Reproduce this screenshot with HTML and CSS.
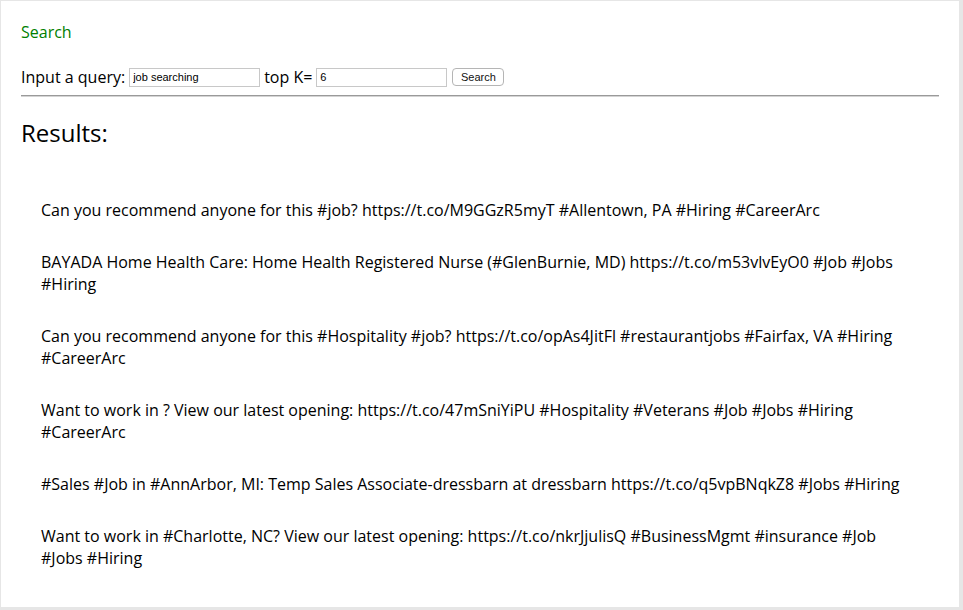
FILE: index.html
```html
<!DOCTYPE html>
<html>
<head>
<meta charset="utf-8">
<link rel="stylesheet" href="styles.css">
</head>
<body>
<div class="frame">
  <div class="page">
    <div class="title">Search</div>
    <form class="query">
      <label class="lbl">Input a query:</label>
      <input class="field" type="text" value="job searching">
      <label class="lbl">top K=</label>
      <input class="field" type="text" value="6">
      <button class="btn" type="button">Search</button>
    </form>
    <hr class="rule">
    <h2 class="heading">Results:</h2>
    <ul class="results">
      <li>Can you recommend anyone for this #job? https://t.co/M9GGzR5myT #Allentown, PA #Hiring #CareerArc</li>
      <li>BAYADA Home Health Care: Home Health Registered Nurse (#GlenBurnie, MD) https://t.co/m53vlvEyO0 #Job #Jobs #Hiring</li>
      <li>Can you recommend anyone for this #Hospitality #job? https://t.co/opAs4JitFl #restaurantjobs #Fairfax, VA #Hiring<br>#CareerArc</li>
      <li>Want to work in ? View our latest opening: https://t.co/47mSniYiPU #Hospitality #Veterans #Job #Jobs #Hiring #CareerArc</li>
      <li>#Sales #Job in #AnnArbor, MI: Temp Sales Associate-dressbarn at dressbarn https://t.co/q5vpBNqkZ8 #Jobs #Hiring</li>
      <li>Want to work in #Charlotte, NC? View our latest opening: https://t.co/nkrJjulisQ #BusinessMgmt #insurance #Job #Jobs #Hiring</li>
    </ul>
  </div>
</div>
</body>
</html>
```
FILE: styles.css
```css
html, body {
  margin: 0;
  padding: 0;
  background: #e6e6e6;
}
.frame {
  width: 958px;
  height: 606px;
  margin-top: 1px;
  margin-left: 1px;
  background: #fff;
  overflow: hidden;
}
.page {
  padding: 20px 20px 0 20px;
  font-family: "Open Sans", "Liberation Sans", sans-serif;
  font-size: 16px;
  color: #000;
}
.title {
  color: #008000;
  line-height: 22px;
}
.query {
  display: flex;
  align-items: center;
  margin-top: 23px;
  height: 22px;
}
.lbl {
  line-height: 22px;
  margin-right: 4px;
}
.field {
  width: 131px;
  height: 19px;
  box-sizing: border-box;
  border: 1px solid #c8c8c8;
  padding: 1px 3px;
  font-family: "Liberation Sans", Arial, sans-serif;
  font-size: 11px;
  margin: 0 4px 0 0;
  color: #000;
}
.btn {
  width: 52px;
  height: 18px;
  box-sizing: border-box;
  margin: 0 0 0 1px;
  padding: 0;
  border: 1px solid #b5b5b5;
  border-radius: 4px;
  background: #fff;
  font-family: "Liberation Sans", Arial, sans-serif;
  font-size: 11px;
  color: #111;
}
.rule {
  margin: 7px 0 0 0;
  border: 0;
  border-top: 1px solid #9a9a9a;
  border-bottom: 1px solid #d4d4d4;
  height: 0;
}
.heading {
  margin: 20px 0 0 0;
  font-size: 24px;
  font-weight: normal;
  line-height: 32px;
}
.results {
  list-style: none;
  margin: 50px 0 0 0;
  padding: 0 20px;
  line-height: 22px;
}
.results li {
  margin-bottom: 30px;
}
```
